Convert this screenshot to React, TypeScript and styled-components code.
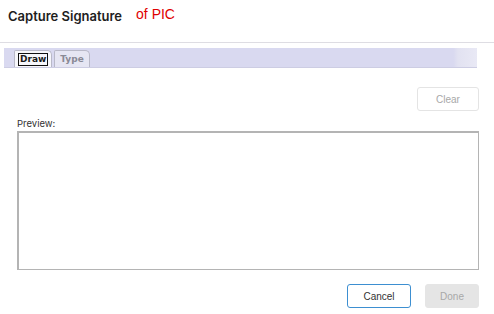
import React from "react";
import styled, { createGlobalStyle } from "styled-components";

const GlobalStyle = createGlobalStyle`
  html, body {
    margin: 0;
    padding: 0;
    background: #ffffff;
  }
  body {
    font-family: Inter, "Liberation Sans", Arial, sans-serif;
    color: #222;
  }
`;

const Dialog = styled.div`
  width: 494px;
  height: 314px;
  box-sizing: border-box;
  display: flex;
  flex-direction: column;
`;

const Header = styled.div`
  height: 43px;
  box-sizing: border-box;
  border-bottom: 1px solid #dedde3;
  display: flex;
  align-items: flex-start;
  padding: 8px 0 0 8px;
`;

const Title = styled.h1`
  margin: 0;
  font-family: Inter, "Liberation Sans", sans-serif;
  font-size: 13px;
  font-weight: 600;
  line-height: 16px;
  color: #1e1e1e;
`;

const Subtitle = styled.span`
  margin-left: 14px;
  margin-top: -2px;
  font-family: "Liberation Sans", Arial, sans-serif;
  font-size: 14px;
  line-height: 16px;
  color: #e00000;
`;

const TabBar = styled.div`
  margin: 5px 0 0 4px;
  width: 473px;
  height: 20px;
  box-sizing: border-box;
  display: flex;
  align-items: flex-end;
  padding-left: 10px;
  gap: 2px;
  border-bottom: 1px solid #cdcde3;
  background: linear-gradient(
    to right,
    #d9d9f0 0%,
    #d9d9f0 95%,
    #e2e2f1 96%,
    #e9e9f5 100%
  );
`;

const Tab = styled.div<{ $active?: boolean }>`
  height: 17px;
  box-sizing: border-box;
  padding: 0 4px;
  display: flex;
  align-items: center;
  border: 1px solid #b9b9c8;
  border-bottom: none;
  border-radius: 2px 5px 0 0;
  background: ${(p) => (p.$active ? "#f7f7fb" : "#e6e6f3")};
  font-family: "DejaVu Sans", "Liberation Sans", sans-serif;
  font-size: 9px;
  font-weight: 700;
  color: ${(p) => (p.$active ? "#1a1a1a" : "#8a8a96")};
`;

const TabLabel = styled.span<{ $focused?: boolean }>`
  padding: 0 1px;
  line-height: 11px;
  outline: ${(p) => (p.$focused ? "1px solid #111" : "none")};
`;

const Body = styled.div`
  padding: 19px 15px 0 17px;
  display: flex;
  flex-direction: column;
`;

const ToolRow = styled.div`
  display: flex;
  justify-content: flex-end;
`;

const Button = styled.button<{
  $variant?: "outline" | "disabled" | "ghost";
  $width: number;
}>`
  width: ${(p) => p.$width}px;
  height: 24px;
  box-sizing: border-box;
  padding: 0;
  border-radius: 3px;
  font-family: "Liberation Sans", Arial, sans-serif;
  font-size: 10px;
  cursor: default;
  border: 1px solid
    ${(p) =>
      p.$variant === "outline"
        ? "#3d8fd1"
        : p.$variant === "disabled"
        ? "#e5e5e5"
        : "#e4e4e4"};
  background: ${(p) => (p.$variant === "disabled" ? "#e5e5e5" : "#ffffff")};
  color: ${(p) => (p.$variant === "outline" ? "#333" : "#a8a8a8")};
`;

const Label = styled.div`
  margin-top: 7px;
  font-family: Inter, "Liberation Sans", sans-serif;
  font-size: 9.5px;
  line-height: 12px;
  color: #333;
`;

const Preview = styled.div`
  margin-top: 1px;
  height: 139px;
  box-sizing: border-box;
  border: 2px solid #b4b4b4;
  border-right-width: 1px;
  border-bottom-width: 1px;
  background: #fff;
`;

const Footer = styled.div`
  margin-top: 14px;
  display: flex;
  justify-content: flex-end;
  gap: 14px;
`;

export default function App() {
  return (
    <Dialog>
      <GlobalStyle />
      <Header>
        <Title>Capture Signature</Title>
        <Subtitle>of PIC</Subtitle>
      </Header>
      <TabBar>
        <Tab $active>
          <TabLabel $focused>Draw</TabLabel>
        </Tab>
        <Tab>
          <TabLabel>Type</TabLabel>
        </Tab>
      </TabBar>
      <Body>
        <ToolRow>
          <Button $variant="ghost" $width={62}>
            Clear
          </Button>
        </ToolRow>
        <Label>Preview:</Label>
        <Preview />
        <Footer>
          <Button $variant="outline" $width={64}>
            Cancel
          </Button>
          <Button $variant="disabled" $width={54}>
            Done
          </Button>
        </Footer>
      </Body>
    </Dialog>
  );
}
